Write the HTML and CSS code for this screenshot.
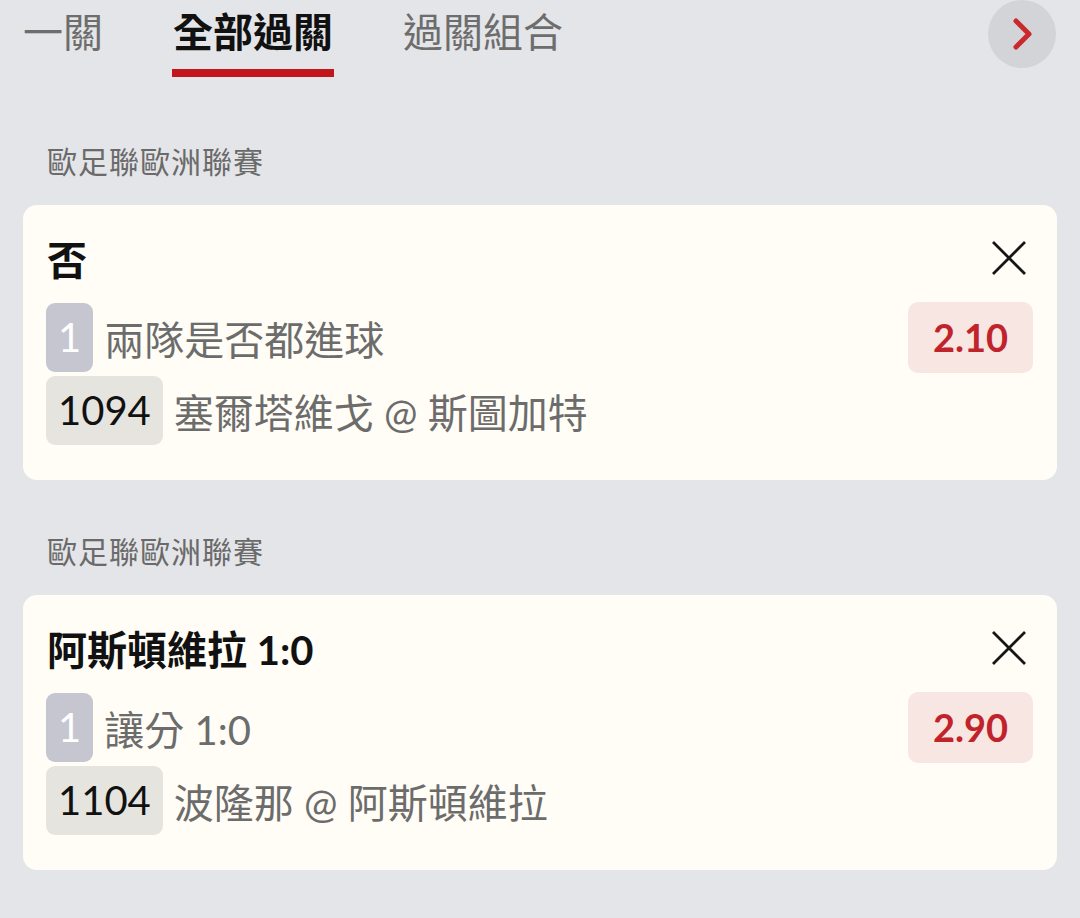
FILE: index.html
```html
<!DOCTYPE html>
<html lang="zh-Hant">

<head>
    <meta charset="UTF-8">
    <meta name="viewport" content="width=device-width, initial-scale=1.0">
    <link rel="stylesheet" href="styles.css">
</head>

<body>
    <div class="tabs">
        <div class="tab">一關</div>
        <div class="tab active">全部過關</div>
        <div class="tab">過關組合</div>
        <button class="nextBtn">
            <svg width="68" height="68" viewBox="0 0 68 68">
                <polyline points="28,21 41,34 28,47" fill="none" stroke="#c9282d" stroke-width="5" stroke-linecap="round" stroke-linejoin="round" />
            </svg>
        </button>
    </div>

    <div class="section">
        <div class="league">歐足聯歐洲聯賽</div>
        <div class="card">
            <div class="cardHead">
                <span class="pick">否</span>
                <svg class="close" width="34" height="34" viewBox="0 0 34 34">
                    <path d="M1 1 L33 33 M33 1 L1 33" stroke="#161616" stroke-width="2.8" />
                </svg>
            </div>
            <div class="row">
                <span class="badge legNo">1</span>
                <span class="txt">兩隊是否都進球</span>
                <span class="odds">2.10</span>
            </div>
            <div class="row">
                <span class="badge matchNo">1094</span>
                <span class="txt">塞爾塔維戈 @ 斯圖加特</span>
            </div>
        </div>
    </div>

    <div class="section">
        <div class="league">歐足聯歐洲聯賽</div>
        <div class="card">
            <div class="cardHead">
                <span class="pick">阿斯頓維拉 1:0</span>
                <svg class="close" width="34" height="34" viewBox="0 0 34 34">
                    <path d="M1 1 L33 33 M33 1 L1 33" stroke="#161616" stroke-width="2.8" />
                </svg>
            </div>
            <div class="row">
                <span class="badge legNo">1</span>
                <span class="txt">讓分 1:0</span>
                <span class="odds">2.90</span>
            </div>
            <div class="row">
                <span class="badge matchNo">1104</span>
                <span class="txt">波隆那 @ 阿斯頓維拉</span>
            </div>
        </div>
    </div>
</body>

</html>
```

FILE: styles.css
```css
html {
    margin: 0px;
    height: 100%;
}

body {
    margin: 0px;
    padding: 0px 23px;
    min-height: 100%;
    background-color: #e4e5e8;
    font-family: Lato, 'Noto Sans CJK TC', sans-serif;
}

.tabs {
    display: flex;
    align-items: flex-start;
    gap: 70px;
    padding-left: 0px;
    height: 90px;
}

.tab {
    font-family: 'Noto Sans CJK TC', sans-serif;
    font-size: 40px;
    line-height: 56px;
    padding-top: 2px;
    padding-bottom: 11px;
    color: #6d6d6d;
    border-bottom: 8px solid transparent;
}

.tab.active {
    color: #111111;
    font-weight: 700;
    border-bottom-color: #c3161c;
    margin: 0 -1px;
    padding: 2px 1px 11px 1px;
}

.nextBtn {
    margin-left: auto;
    margin-right: 1px;
    width: 68px;
    height: 68px;
    padding: 0;
    border: none;
    outline: none;
    border-radius: 50%;
    background-color: #d3d4d8;
}

.nextBtn svg {
    display: block;
}

.league {
    margin-top: 50px;
    margin-bottom: 25px;
    padding-left: 24px;
    font-family: 'Noto Sans CJK TC', sans-serif;
    font-size: 30px;
    line-height: 40px;
    letter-spacing: 1px;
    color: #6a6a6a;
}

.card {
    background-color: #fffdf5;
    border-radius: 14px;
    padding: 29px 24px 35px 23px;
}

.cardHead {
    display: flex;
    justify-content: space-between;
    align-items: center;
    height: 48px;
    margin-bottom: 21px;
}

.pick {
    font-size: 40px;
    font-weight: 700;
    color: #111111;
    padding-left: 1px;
}

.close {
    margin-right: 7px;
}

.row {
    display: flex;
    align-items: center;
    height: 69px;
    margin-bottom: 4px;
}

.row:last-child {
    margin-bottom: 0;
}

.badge {
    height: 69px;
    line-height: 69px;
    padding: 0 12px;
    border-radius: 9px;
    font-size: 40px;
    margin-right: 11px;
}

.legNo {
    background-color: #c5c6cf;
    color: #ffffff;
}

.matchNo {
    background-color: #e6e4df;
    color: #111111;
}

.txt {
    font-size: 40px;
    color: #6c6c6c;
}

.odds {
    margin-left: auto;
    width: 125px;
    height: 71px;
    line-height: 71px;
    text-align: center;
    border-radius: 10px;
    background-color: #f8e6e2;
    color: #c1232b;
    font-size: 38px;
    font-weight: 700;
}
```
